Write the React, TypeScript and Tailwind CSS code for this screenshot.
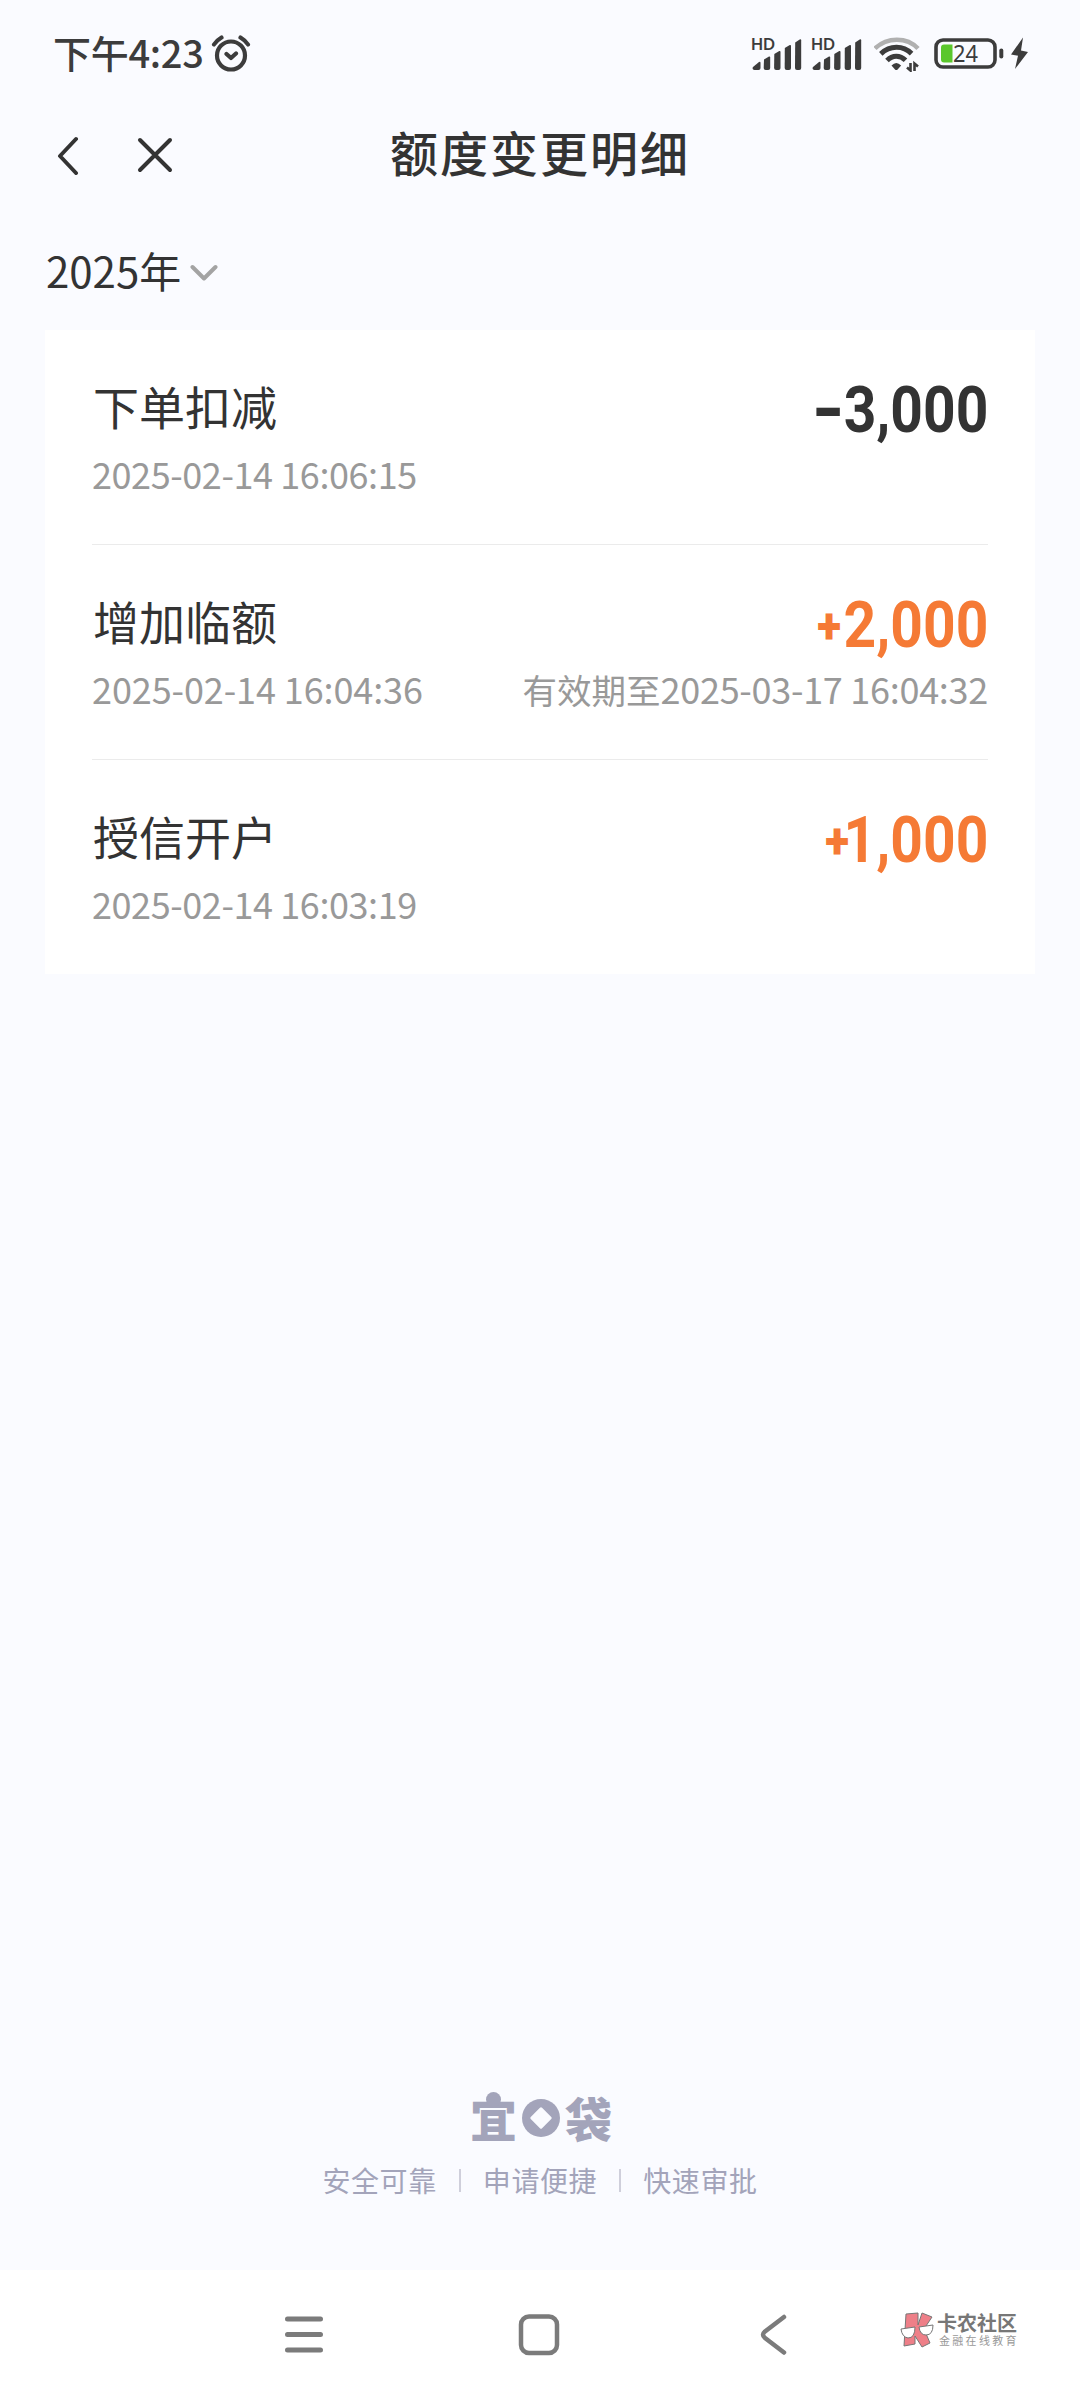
import type { ReactNode } from "react";

type QuotaRecord = {
  title: string;
  time: string;
  sign: "+" | "-";
  amount: string;
  expires?: { label: string; time: string };
  timeClass: string;
  signClass: string;
};

const records: QuotaRecord[] = [
  {
    title: "下单扣减",
    time: "2025-02-14 16:06:15",
    sign: "-",
    amount: "3,000",
    timeClass: "tracking-[-0.42px]",
    signClass: "mr-[-3px] origin-right scale-x-[1.4] text-[64px]",
  },
  {
    title: "增加临额",
    time: "2025-02-14 16:04:36",
    sign: "+",
    amount: "2,000",
    expires: { label: "有效期至", time: "2025-03-17 16:04:32" },
    timeClass: "tracking-[-0.1px]",
    signClass: "mr-[3px] text-[50px]",
  },
  {
    title: "授信开户",
    time: "2025-02-14 16:03:19",
    sign: "+",
    amount: "1,000",
    timeClass: "tracking-[-0.42px]",
    signClass: "mr-[-6px] text-[50px]",
  },
];

function Signal() {
  return (
    <svg width="51" height="34" viewBox="0 0 51 34" fill="#3c3c3c" overflow="visible">
      <text
        x="0"
        y="13"
        fontSize="17"
        fontWeight="700"
        fontFamily="Lato, sans-serif"
        textLength="24"
        lengthAdjust="spacingAndGlyphs"
      >
        HD
      </text>
      <path d="M2 30l6-5q1.500-1 1.500 1v5q0 2-2 2h-4q-2 0-2-2z" />
      <path d="M13 22.500l5-3q1.200-.5 1.200 1V31q0 2-2 2h-2.500q-2 0-2-2z" />
      <path d="M23.300 17l5-3q1.200-.5 1.200 1v16q0 2-2 2h-2.400q-2 0-2-2z" />
      <path d="M33.800 11l5-3q1.200-.5 1.200 1v22q0 2-2 2h-2.300q-2 0-2-2z" />
      <path d="M44.200 5.500l4.500-3q1.500-.6 1.500 1V31q0 2-2 2H46q-2 0-2-2z" />
    </svg>
  );
}

function Wifi() {
  return (
    <svg width="48" height="36" viewBox="0 0 48 36" fill="none">
      <path d="M1 12.500C13 .8 33 .8 44 12.500" stroke="#b0b0b0" strokeWidth="4.500" />
      <path d="M6.800 17.800C16 9.200 29 9.200 37.600 17.600" stroke="#3c3c3c" strokeWidth="5" />
      <path d="M13 24.500C18.500 18.800 26 18.800 31.500 24.300" stroke="#3c3c3c" strokeWidth="5" />
      <path d="M17.500 29.500q4.800-5 9.600 0l-3.500 4q-1.300 1.200-2.600 0z" fill="#3c3c3c" />
      <path d="M36.500 27v7.500l-3.500-3M40.500 35v-7.500l3.500 3" stroke="#3c3c3c" strokeWidth="2.600" />
    </svg>
  );
}

function Battery() {
  return (
    <svg width="96" height="36" viewBox="0 0 96 36" overflow="visible">
      <rect x="2" y="4" width="59" height="27" rx="7" fill="none" stroke="#3c3c3c" strokeWidth="3.600" />
      <path d="M10 8.500h8.500v18H10q-3 0-3-3v-12q0-3 3-3z" fill="#5bc72c" />
      <text
        x="19"
        y="26"
        fontSize="23"
        fontFamily="'Noto Sans', sans-serif"
        fill="#3c3c3c"
        textLength="25"
        lengthAdjust="spacingAndGlyphs"
      >
        24
      </text>
      <rect x="65.300" y="12.500" width="4" height="10" rx="2" fill="#3c3c3c" />
      <path d="M89 1.500L77 18.500l7 1.200-3 13.300 13-17-7-1.500z" fill="#3c3c3c" />
    </svg>
  );
}

function AlarmIcon() {
  return (
    <svg width="40" height="38" viewBox="0 0 40 38" fill="none" stroke="#3c3c3c" strokeWidth="4.200" strokeLinecap="round" strokeLinejoin="round">
      <circle cx="20" cy="20.500" r="14" />
      <path d="M15.500 19l4.500 4 5-4.500M3 9.500q2.500-4 7.500-7M37 9.500q-2.500-4-7.500-7" />
    </svg>
  );
}

function StatusBar() {
  return (
    <header className="flex h-[108px] items-center justify-between pl-[53px] pr-[50px]">
      <div className="flex items-center gap-[7px]">
        <span className="pb-[4px] text-[38px] leading-none font-medium tracking-[-0.3px] text-[#3c3c3c]">下午4:23</span>
        <AlarmIcon />
      </div>
      <div className="flex items-center">
        <Signal />
        <span className="w-[9px]" />
        <Signal />
        <span className="w-[12px]" />
        <Wifi />
        <span className="w-[12px]" />
        <Battery />
      </div>
    </header>
  );
}

function TitleBar() {
  return (
    <div className="grid h-[90px] grid-cols-[1fr_auto_1fr] items-center">
      <div className="flex items-center gap-[58px] pt-[3px] pl-[56px]">
        <svg width="23" height="40" viewBox="0 0 23 40" fill="none" stroke="#333" strokeWidth="4" strokeLinecap="round" strokeLinejoin="round">
          <path d="M20 4L4 21l16 17" />
        </svg>
        <svg width="36" height="36" viewBox="0 0 36 36" fill="none" stroke="#333" strokeWidth="4" strokeLinecap="round">
          <path d="M3 3l30 30M33 3L3 33" />
        </svg>
      </div>
      <h1 className="pb-[4px] text-[48px] leading-none font-medium tracking-[2px] text-[#333]">额度变更明细</h1>
      <span />
    </div>
  );
}

function Amount({ record }: { record: QuotaRecord }) {
  const color = record.sign === "+" ? "text-[#f57a35]" : "text-[#333]";
  return (
    <div className={`flex origin-right scale-x-[0.89] items-center pt-[3px] font-[Roboto,sans-serif] font-bold ${color}`}>
      <span className={`leading-none font-black ${record.signClass}`}>{record.sign}</span>
      <span className="text-[64px] leading-none">{record.amount}</span>
    </div>
  );
}

function RecordRow({ record }: { record: QuotaRecord }) {
  return (
    <li className="h-[215px] border-b border-[#ebebeb] pt-[51px] last:h-[214px] last:border-b-0">
      <div className="flex h-[56px] items-center justify-between">
        <h2 className="pb-[8px] pl-[1px] text-[46px] leading-none text-[#333]">{record.title}</h2>
        <Amount record={record} />
      </div>
      <div className="mt-[18px] flex justify-between text-[36px] leading-[36px] text-[#999]">
        <span className={record.timeClass}>{record.time}</span>
        {record.expires && (
          <span>
            <span className="text-[34.500px]">{record.expires.label}</span>
            <span className="tracking-[-0.28px]">{record.expires.time}</span>
          </span>
        )}
      </div>
    </li>
  );
}

function Divider() {
  return <span className="mx-[22px] h-[23px] w-[2px] bg-[#cfcfdb]" />;
}

function Slogan({ children }: { children: ReactNode }) {
  return <span className="tracking-[0.6px]">{children}</span>;
}

function Brand() {
  return (
    <footer className="flex flex-col items-center pb-[73px] text-[#a3a4ba]">
      <div className="flex h-[54px] items-center gap-[5px] pl-[2px] text-[47px] leading-none font-black">
        <span className="relative">
          宜
          <span className="absolute top-[-1px] left-[16px] h-[15px] w-[15px] rounded-full bg-[#a3a4ba]" />
        </span>
        <svg width="38" height="38" viewBox="0 0 38 38" className="mt-[4px]">
          <circle cx="19" cy="19" r="19" fill="#a3a4ba" />
          <rect x="11" y="11" width="16" height="16" rx="1.500" fill="#fafbff" transform="rotate(45 19 19)" />
        </svg>
        <span>袋</span>
      </div>
      <div className="mt-[20px] flex items-center text-[28px] leading-[34px]">
        <Slogan>安全可靠</Slogan>
        <Divider />
        <Slogan>申请便捷</Slogan>
        <Divider />
        <Slogan>快速审批</Slogan>
      </div>
    </footer>
  );
}

function Watermark() {
  return (
    <div className="absolute top-[42px] left-[899px] flex items-start gap-[2px]">
      <svg width="36" height="38" viewBox="0 0 36 38" stroke="#777" strokeWidth="1">
        <path d="M7 2l12-1v12l4-12 10 4-8 12 6 14-8 4-7-11v8l-11 2z" fill="#ee7f88" />
        <path d="M2 17l14-2q0 11-7 11-6-1-7-9z" fill="#fff" />
        <path d="M20 15l14-2q0 10-7 10-6 0-7-8z" fill="#fff" />
      </svg>
      <div className="flex flex-col">
        <span className="text-[20px] leading-[22px] font-bold text-[#777]">卡农社区</span>
        <span className="pl-[2px] text-[11px] leading-[13px] tracking-[2.300px] text-[#999]">金融在线教育</span>
      </div>
    </div>
  );
}

function NavigationBar() {
  return (
    <nav className="relative flex h-[130px] items-center bg-white pb-[1px] pl-[284px]">
      <svg width="40" height="42" viewBox="0 0 40 42" stroke="#7b7b7b" strokeWidth="5" strokeLinecap="round">
        <path d="M3.500 5h33M3.500 20.500h33M3.500 36h33" />
      </svg>
      <svg className="ml-[194px]" width="42" height="42" viewBox="0 0 42 42" fill="none" stroke="#7b7b7b" strokeWidth="4.500">
        <rect x="3" y="2.500" width="36" height="36.500" rx="8" />
      </svg>
      <svg className="ml-[200px]" width="28" height="42" viewBox="0 0 28 42" fill="none" stroke="#7b7b7b" strokeWidth="4.500" strokeLinecap="round">
        <path d="M24 3L5 17.500q-4 3.200 0 6.400L24 38.500" />
      </svg>
      <Watermark />
    </nav>
  );
}

export default function App() {
  return (
    <div className="flex h-[2400px] w-[1080px] flex-col overflow-hidden bg-[#fafbff] font-['Noto_Sans_CJK_SC',sans-serif]">
      <StatusBar />
      <TitleBar />
      <main className="flex-1 px-[45px]">
        <button className="flex h-[132px] items-center gap-[9px] pt-[18px] text-[42px] leading-none text-[#333]">
          <span className="pb-[6px] pl-[1px]">2025年</span>
          <svg width="28" height="18" viewBox="0 0 28 18" fill="none" stroke="#a3a3a3" strokeWidth="4" strokeLinecap="round" strokeLinejoin="round">
            <path d="M2.500 3L14 14.500 25.500 3" />
          </svg>
        </button>
        <ul className="bg-white px-[47px]">
          {records.map((record) => (
            <RecordRow key={record.time} record={record} />
          ))}
        </ul>
      </main>
      <Brand />
      <NavigationBar />
    </div>
  );
}
